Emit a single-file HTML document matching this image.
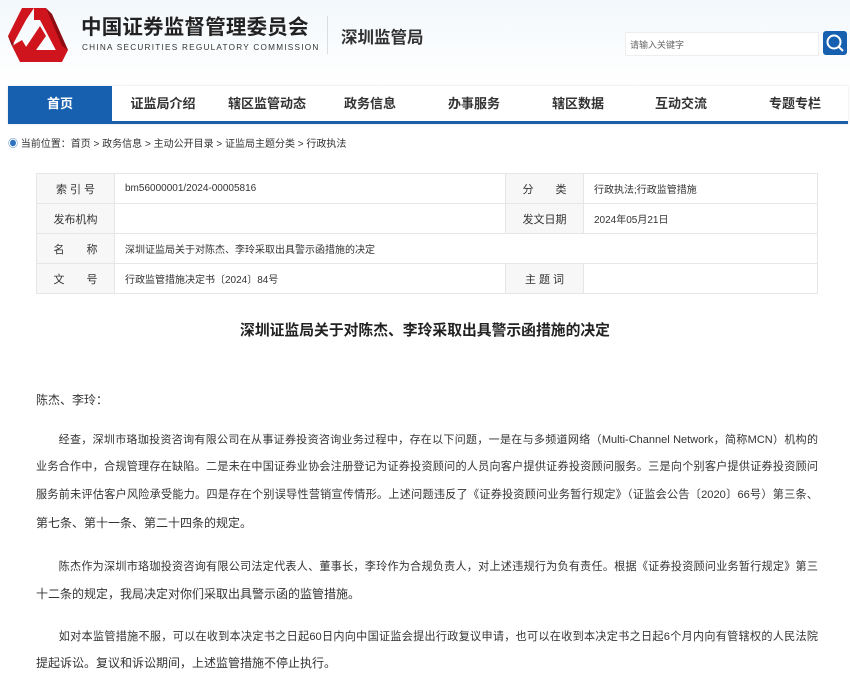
<!DOCTYPE html>
<html><head><meta charset="utf-8"><style>
*{margin:0;padding:0;box-sizing:border-box}
body{width:850px;height:676px;overflow:hidden;background:#fff;font-family:"Liberation Sans","Noto Sans CJK SC",sans-serif;color:#333;position:relative}
.hdr{position:absolute;left:0;top:0;width:850px;height:86px;background:linear-gradient(#f3f8fc,#fff)}
.t1{position:absolute;left:81px;top:10px;font-size:20.5px;font-weight:bold;color:#222;white-space:nowrap;letter-spacing:0.2px}
.t2{position:absolute;left:82px;top:43px;font-size:8.2px;color:#333;letter-spacing:1.25px;white-space:nowrap}
.sep{position:absolute;left:327px;top:16px;width:1px;height:38px;background:#ddd}
.t3{position:absolute;left:341px;top:24px;font-size:16.5px;font-weight:bold;color:#333;white-space:nowrap}
.srch{position:absolute;left:625px;top:32px;width:194px;height:24px;background:#fff;border:1px solid #eee;font-size:9px;color:#666;padding:5px 4px}
.sbtn{position:absolute;left:823px;top:31px;width:24px;height:24px;background:#1760b0;border-radius:3px}
.nav{position:absolute;left:8px;top:86px;width:840px;height:38px;background:#fff;border-bottom:3px solid #1a5fa8;box-shadow:0 0 2px #ddd}
.nav div{position:absolute;top:0;height:35px;line-height:35px;font-size:13px;font-weight:bold;color:#333;transform:translateX(-50%);white-space:nowrap}
.home{position:absolute;left:8px;top:86px;width:104px;height:38px;background:#1760b0;color:#fff;font-size:13px;font-weight:bold;text-align:center;line-height:36px}
.crumb{position:absolute;left:8px;top:135px;font-size:10px;color:#333;white-space:nowrap}
table{position:absolute;left:36px;top:173px;width:782px;border-collapse:collapse;font-size:10px}
td{border:1px solid #e6e6e6;height:30px;padding:0 10px;color:#333}
td.l{background:#f7f7f7;text-align:center;width:78px;font-size:11px}
.title{position:absolute;left:0;width:850px;top:319px;text-align:center;font-size:14.8px;font-weight:bold;color:#222}
.b{position:absolute;left:36px;width:782px;font-size:12px;color:#333;line-height:20px;white-space:nowrap}
.j{text-align:justify;text-align-last:justify;white-space:normal;font-size:11.6px}
</style></head><body>
<div class="hdr"></div>
<svg style="position:absolute;left:6px;top:6px" width="66" height="58" viewBox="0 0 66 58">
<g fill="#d0141e">
<polygon points="28,2 40,2 62,44 54,52 34,14 28,14"/>
<polygon points="28,2 16,2 2,30 6,40 20,14"/>
<polygon points="6,40 14,56 56,56 62,44 22,44 16,34"/>
<polygon points="34,20 40,30 30,44 18,44"/>
</g>
<g fill="#8e0c12"><polygon points="40,2 46,8 62,44 56,40"/><polygon points="2,30 8,38 6,40"/></g>
</svg>
<div class="t1">中国证券监督管理委员会</div>
<div class="t2">CHINA SECURITIES REGULATORY COMMISSION</div>
<div class="sep"></div>
<div class="t3">深圳监管局</div>
<div class="srch">请输入关键字</div>
<div class="sbtn"><svg width="24" height="24"><circle cx="11" cy="11" r="6.5" stroke="#fff" stroke-width="2" fill="none"/><line x1="16" y1="16" x2="20" y2="20" stroke="#fff" stroke-width="2"/></svg></div>
<div class="nav">
<div style="left:155px">证监局介绍</div><div style="left:259px">辖区监管动态</div><div style="left:362px">政务信息</div><div style="left:466px">办事服务</div><div style="left:570px">辖区数据</div><div style="left:673px">互动交流</div><div style="left:787px">专题专栏</div>
</div>
<div class="home">首页</div>
<div class="crumb"><span style="color:#2a73c0">&#9673;</span> 当前位置：首页 &gt; 政务信息 &gt; 主动公开目录 &gt; 证监局主题分类 &gt; 行政执法</div>
<table>
<tr><td class="l">索 引 号</td><td>bm56000001/2024-00005816</td><td class="l" style="width:76px">分　　类</td><td style="width:234px">行政执法;行政监管措施</td></tr>
<tr><td class="l">发布机构</td><td></td><td class="l">发文日期</td><td>2024年05月21日</td></tr>
<tr><td class="l">名　　称</td><td colspan="3">深圳证监局关于对陈杰、李玲采取出具警示函措施的决定</td></tr>
<tr><td class="l">文　　号</td><td>行政监管措施决定书〔2024〕84号</td><td class="l">主 题 词</td><td></td></tr>
</table>
<div class="title">深圳证监局关于对陈杰、李玲采取出具警示函措施的决定</div>
<div class="b" style="top:390px">陈杰、李玲：</div>
<div class="b j" style="top:430px;height:20px;overflow:hidden;font-size:11px">　　经查，深圳市珞珈投资咨询有限公司在从事证券投资咨询业务过程中，存在以下问题，一是在与多频道网络（Multi-Channel Network，简称MCN）机构的</div>
<div class="b j" style="top:457px;height:20px;overflow:hidden;font-size:11.1px">业务合作中，合规管理存在缺陷。二是未在中国证券业协会注册登记为证券投资顾问的人员向客户提供证券投资顾问服务。三是向个别客户提供证券投资顾问</div>
<div class="b j" style="top:485px;height:20px;overflow:hidden;font-size:11.1px">服务前未评估客户风险承受能力。四是存在个别误导性营销宣传情形。上述问题违反了《证券投资顾问业务暂行规定》（证监会公告〔2020〕66号）第三条、</div>
<div class="b" style="top:513px">第七条、第十一条、第二十四条的规定。</div>
<div class="b j" style="top:557px;height:20px;overflow:hidden;font-size:11.1px">　　陈杰作为深圳市珞珈投资咨询有限公司法定代表人、董事长，李玲作为合规负责人，对上述违规行为负有责任。根据《证券投资顾问业务暂行规定》第三</div>
<div class="b" style="top:584px">十二条的规定，我局决定对你们采取出具警示函的监管措施。</div>
<div class="b j" style="top:627px;height:20px;overflow:hidden;font-size:11.1px">　　如对本监管措施不服，可以在收到本决定书之日起60日内向中国证监会提出行政复议申请，也可以在收到本决定书之日起6个月内向有管辖权的人民法院</div>
<div class="b" style="top:653px">提起诉讼。复议和诉讼期间，上述监管措施不停止执行。</div>
</body></html>
